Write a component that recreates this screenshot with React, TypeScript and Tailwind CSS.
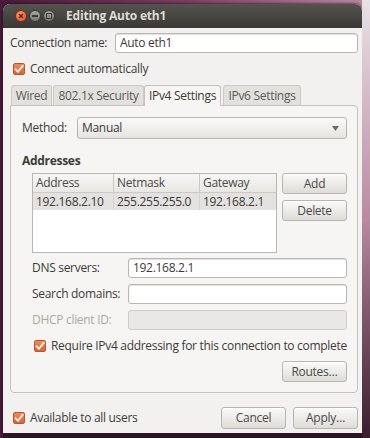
import React from 'react';

const Check: React.FC = () => (
  <span className="w-[12px] h-[12px] rounded-[2px] border border-[#b5582f] bg-gradient-to-b from-[#f08a5a] to-[#d8653a] flex items-center justify-center shrink-0">
    <svg width="10" height="10" viewBox="0 0 10 10">
      <path d="M1.5 5.2 L4 7.8 L8.8 1.6" fill="none" stroke="#fff3ea" strokeWidth="1.8" strokeLinecap="round" strokeLinejoin="round" />
    </svg>
  </span>
);

const Button: React.FC<{ label: string; className?: string }> = ({ label, className = '' }) => (
  <div
    className={`h-[21px] rounded-[3px] border border-[#b8b5ae] bg-gradient-to-b from-[#fafaf9] to-[#dedcd7] shadow-[inset_0_1px_0_#ffffff] flex items-center justify-center text-[#4a4a48] ${className}`}
  >
    {label}
  </div>
);

const Input: React.FC<{ value?: string; disabled?: boolean; className?: string }> = ({
  value = '',
  disabled,
  className = '',
}) => (
  <div
    className={`h-[20px] rounded-[3px] border px-[4px] flex items-center ${
      disabled ? 'bg-[#e9e8e6] border-[#cfcdc8]' : 'bg-white border-[#b9b6b0] shadow-[inset_0_1px_1px_#e2e0dc]'
    } ${className}`}
  >
    {value}
  </div>
);

const TabItem: React.FC<{ label: string; active?: boolean; className?: string }> = ({ label, active, className = '' }) => (
  <div
    className={`h-[20px] rounded-t-[3px] border border-b-0 flex items-center justify-center ${
      active ? 'bg-[#f6f5f4] border-[#c6c3bd] h-[21px] -mb-px relative z-10' : 'bg-[#e3e1dd] border-[#cdcac4] text-[#5a5955]'
    } ${className}`}
  >
    {label}
  </div>
);

export default function App() {
  return (
    <div className="w-[370px] h-[438px] overflow-hidden bg-gradient-to-r from-[#4a1a3a] via-[#7a3e60] to-[#b88aa2] font-['Open_Sans',sans-serif] text-[12px] tracking-[-0.3px] whitespace-nowrap text-[#3c3b37] flex">
      <div className="w-[3px] shrink-0" />
      <div className="flex flex-col shrink-0 pt-[4px]">
        <div className="w-[359px] h-[429px] rounded-t-[7px] bg-[#f2f1f0] flex flex-col overflow-hidden shadow-[0_0_3px_#1a0a14]">
          {/* title bar */}
          <div className="h-[24px] shrink-0 bg-gradient-to-b from-[#55534e] to-[#3a3935] flex items-center pl-[12px]">
            <span className="w-[12px] h-[12px] rounded-full bg-[radial-gradient(circle_at_40%_35%,#fb9a6c,#e0552a)] border border-[#7a2e14] flex items-center justify-center">
              <svg width="6" height="6" viewBox="0 0 6 6">
                <path d="M1 1 L5 5 M5 1 L1 5" stroke="#4a1a0a" strokeWidth="1.3" />
              </svg>
            </span>
            <span className="ml-[2px] w-[12px] h-[12px] rounded-full bg-gradient-to-b from-[#a8a6a0] to-[#7a7873] border border-[#3a3935] flex items-center justify-center">
              <span className="w-[6px] h-[2px] bg-[#3c3b37]" />
            </span>
            <span className="ml-[2px] w-[12px] h-[12px] rounded-full bg-gradient-to-b from-[#a8a6a0] to-[#7a7873] border border-[#3a3935] flex items-center justify-center">
              <span className="w-[6px] h-[6px] border border-[#3c3b37]" />
            </span>
            <span className="ml-[11px] font-bold text-[12px] tracking-[-0.2px] text-[#dfdbd2]">Editing Auto eth1</span>
          </div>

          {/* body */}
          <div className="flex flex-col pl-[7px] pr-[4px] flex-1">
            <div className="flex items-center mt-[5px] h-[20px]">
              <span className="w-[105px]">Connection name:</span>
              <Input value="Auto eth1" className="flex-1" />
            </div>
            <div className="flex items-center gap-[5px] mt-[10px] pl-[3px] h-[12px]">
              <Check />
              <span>Connect automatically</span>
            </div>

            {/* tabs */}
            <div className="flex items-end mt-[9px] h-[21px] pl-[1px]">
              <TabItem label="Wired" className="w-[41px]" />
              <TabItem label="802.1x Security" className="w-[91px] ml-px" />
              <TabItem label="IPv4 Settings" active className="w-[77px]" />
              <TabItem label="IPv6 Settings" className="w-[78px] ml-[2px]" />
            </div>

            <div className="h-[288px] rounded-b-[4px] rounded-tr-[4px] border border-[#c6c3bd] bg-[#f6f5f4] flex flex-col pl-[11px] pr-[10px]">
              <div className="flex items-center mt-[11px] h-[22px]">
                <span className="w-[55px]">Method:</span>
                <div className="flex-1 h-[22px] rounded-[3px] border border-[#b9b6b0] bg-gradient-to-b from-[#fafaf9] to-[#e6e4e0] flex items-center pl-[4px] pr-[7px]">
                  <span className="flex-1">Manual</span>
                  <svg width="7" height="5" viewBox="0 0 7 5">
                    <path d="M0 0 L7 0 L3.5 5 Z" fill="#6a6965" />
                  </svg>
                </div>
              </div>

              <div className="font-bold mt-[14px] leading-[16px]">Addresses</div>

              <div className="flex mt-[4px] pl-[10px]">
                <div className="w-[245px] h-[80px] border border-[#b9b6b0] bg-white flex flex-col">
                  <div className="flex h-[19px] bg-gradient-to-b from-[#f7f6f5] to-[#e9e7e3] border-b border-[#cdcac4] text-[#4a4a48]">
                    <span className="w-[81px] pl-[3px] flex items-center border-r border-[#cdcac4]">Address</span>
                    <span className="w-[86px] pl-[3px] flex items-center border-r border-[#cdcac4]">Netmask</span>
                    <span className="flex-1 pl-[3px] flex items-center">Gateway</span>
                  </div>
                  <div className="flex h-[17px] bg-[#e3e2e0]">
                    <span className="w-[81px] pl-[3px] flex items-center border-r border-[#d6d4d0]">192.168.2.10</span>
                    <span className="w-[86px] pl-[3px] flex items-center border-r border-[#d6d4d0]">255.255.255.0</span>
                    <span className="flex-1 pl-[3px] flex items-center">192.168.2.1</span>
                  </div>
                </div>
                <div className="flex flex-col gap-[6px] ml-[5px] flex-1">
                  <Button label="Add" />
                  <Button label="Delete" />
                </div>
              </div>

              <div className="flex items-center mt-[5px] pl-[10px] h-[20px]">
                <span className="w-[96px]">DNS servers:</span>
                <Input value="192.168.2.1" className="flex-1" />
              </div>
              <div className="flex items-center mt-[6px] pl-[10px] h-[20px]">
                <span className="w-[96px]">Search domains:</span>
                <Input className="flex-1" />
              </div>
              <div className="flex items-center mt-[6px] pl-[10px] h-[20px]">
                <span className="w-[96px] text-[#aaa8a3]">DHCP client ID:</span>
                <Input disabled className="flex-1" />
              </div>

              <div className="flex items-center gap-[5px] mt-[9px] pl-[12px] h-[13px]">
                <Check />
                <span>Require IPv4 addressing for this connection to complete</span>
              </div>

              <div className="flex justify-end mt-[9px]">
                <Button label="Routes…" className="w-[65px]" />
              </div>
            </div>

            {/* bottom row */}
            <div className="flex items-center mt-[14px] h-[22px]">
              <div className="flex items-center gap-[5px] pl-[3px] flex-1">
                <Check />
                <span>Available to all users</span>
              </div>
              <Button label="Cancel" className="w-[65px] h-[22px]" />
              <Button label="Apply…" className="w-[65px] h-[22px] ml-[7px]" />
            </div>
          </div>
        </div>
        <div className="flex-1 bg-[#2a1522]" />
      </div>
      <div className="flex-1 bg-gradient-to-b from-[#e8e2e5] via-[#b98aa2] to-[#3a1e2e]" />
    </div>
  );
}
